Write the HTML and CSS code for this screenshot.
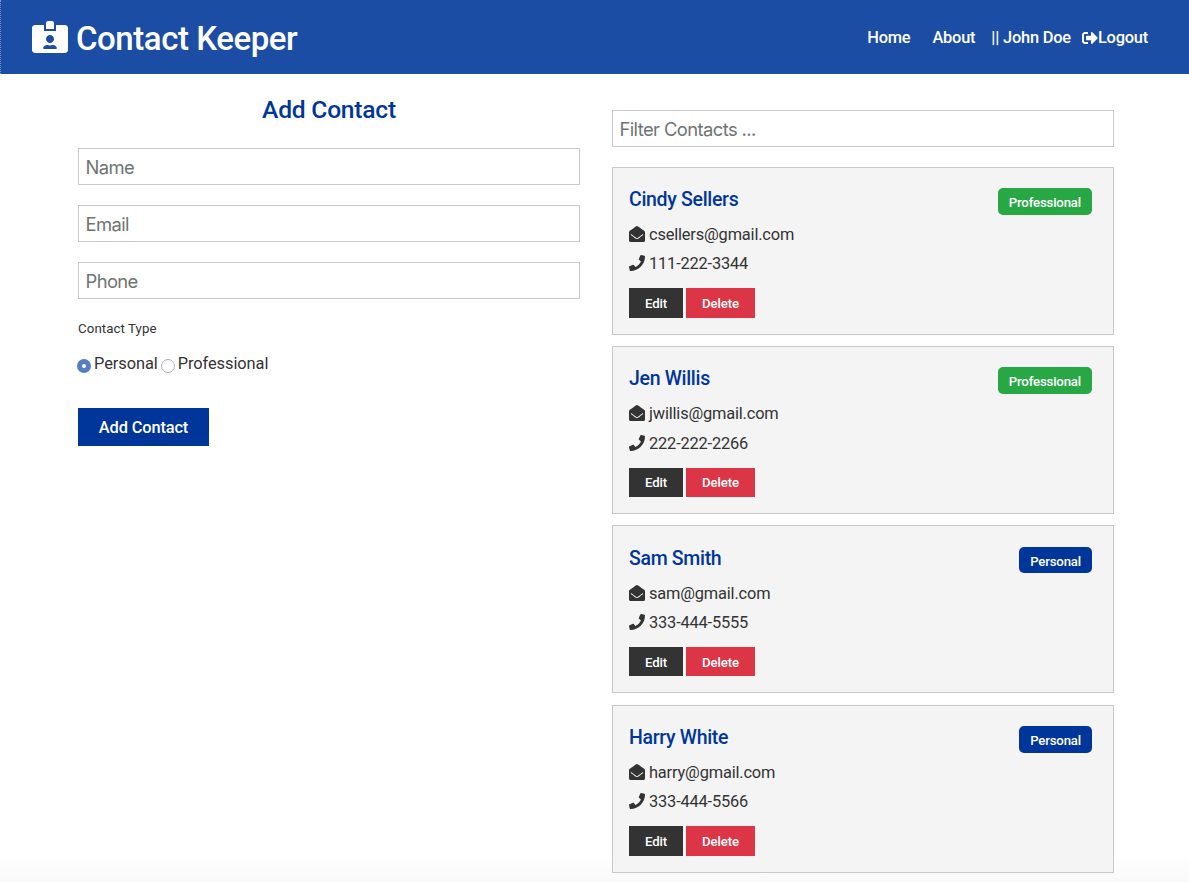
FILE: index.html
```html
<!DOCTYPE html>
<html lang="en">
<head>
<meta charset="utf-8">
<title>Contact Keeper</title>
<link rel="stylesheet" href="styles.css">
</head>
<body>
<svg class="sprite" aria-hidden="true">
  <symbol id="id-card" viewBox="0 0 576 512"><path d="M528 64H384v96H192V64H48C21.5 64 0 85.5 0 112v352c0 26.5 21.5 48 48 48h480c26.5 0 48-21.5 48-48V112c0-26.5-21.5-48-48-48zM288 224c35.3 0 64 28.7 64 64s-28.7 64-64 64-64-28.7-64-64 28.7-64 64-64zm93.3 224H194.7c-10.4 0-18.8-10-15.6-19.8 8.3-25.6 32.4-44.2 60.9-44.2h8.2c12.3 5.1 25.7 8 39.8 8s27.6-2.9 39.8-8h8.2c28.4 0 52.5 18.5 60.9 44.2 3.2 9.9-5.2 19.8-15.6 19.8zM352 32c0-17.7-14.3-32-32-32h-64c-17.7 0-32 14.3-32 32v96h128V32z"/></symbol>
  <symbol id="sign-out" viewBox="0 0 512 512"><path d="M497 273L329 441c-15 15-41 4.5-41-17v-96H152c-13.3 0-24-10.7-24-24v-96c0-13.3 10.7-24 24-24h136V88c0-21.4 25.9-32 41-17l168 168c9.3 9.4 9.3 24.6 0 34zM192 436v-40c0-6.6-5.4-12-12-12H96c-17.7 0-32-14.3-32-32V160c0-17.7 14.3-32 32-32h84c6.6 0 12-5.4 12-12V76c0-6.6-5.4-12-12-12H96c-53 0-96 43-96 96v192c0 53 43 96 96 96h84c6.6 0 12-5.4 12-12z"/></symbol>
  <symbol id="envelope" viewBox="0 0 512 512"><path d="M512 464c0 26.51-21.49 48-48 48H48c-26.51 0-48-21.49-48-48V200.724a48 48 0 0 1 18.387-37.776c24.913-19.529 45.501-35.365 164.2-121.511C199.412 29.17 232.797-.347 256 .003c23.198-.354 56.596 29.172 73.413 41.433 118.687 86.137 139.303 101.995 164.2 121.512A48 48 0 0 1 512 200.724V464zm-65.666-196.605c-2.563-3.728-7.7-4.595-11.339-1.907-22.845 16.873-55.462 40.705-105.582 77.079-16.825 12.266-50.21 41.781-73.413 41.43-23.211.344-56.559-29.143-73.413-41.43-50.114-36.37-82.734-60.204-105.582-77.079-3.639-2.688-8.776-1.821-11.339 1.907l-9.072 13.196a7.998 7.998 0 0 0 1.839 10.967c22.887 16.899 55.454 40.69 105.303 76.868 20.274 14.781 56.524 47.813 92.264 47.573 35.724.242 71.961-32.771 92.263-47.573 49.85-36.179 82.418-59.97 105.303-76.868a7.998 7.998 0 0 0 1.839-10.967l-9.071-13.196z"/></symbol>
  <symbol id="phone" viewBox="0 0 512 512"><path d="M493.4 24.6l-104-24c-11.3-2.6-22.9 3.3-27.5 13.9l-48 112c-4.2 9.8-1.4 21.3 6.9 28l60.6 49.6c-36 76.7-98.9 140.5-177.2 177.2l-49.6-60.6c-6.8-8.3-18.2-11.1-28-6.9l-112 48C3.9 366.5-2 378.1.6 389.4l24 104C27.1 504.2 36.7 512 48 512c256.1 0 464-207.5 464-464 0-11.2-7.7-20.9-18.6-23.4z"/></symbol>
</svg>
<header class="navbar">
  <h1 class="brand"><svg class="brand-icon"><use href="#id-card"/></svg><span>Contact Keeper</span></h1>
  <nav class="links">
    <a class="home">Home</a><a class="about">About</a><span class="user">|| John Doe</span><a class="logout"><svg class="icon"><use href="#sign-out"/></svg><span>Logout</span></a>
  </nav>
</header>
<main class="container">
  <form class="contact-form">
    <h2 class="form-title">Add Contact</h2>
    <input class="field" type="text" placeholder="Name">
    <input class="field" type="text" placeholder="Email">
    <input class="field" type="text" placeholder="Phone">
    <h5 class="type-label">Contact Type</h5>
    <div class="radios">
      <label class="radio"><input type="radio" name="type" checked><span>Personal</span></label>
      <label class="radio"><input type="radio" name="type"><span>Professional</span></label>
    </div>
    <button class="submit" type="button">Add Contact</button>
  </form>
  <section class="contacts">
    <input class="field" type="text" placeholder="Filter Contacts ...">
    <div class="cards">
      <article class="card">
        <div class="card-head"><h3 class="name">Cindy Sellers</h3><span class="badge success">Professional</span></div>
        <p class="line"><svg class="icon"><use href="#envelope"/></svg>csellers@gmail.com</p>
        <p class="line"><svg class="icon"><use href="#phone"/></svg>111-222-3344</p>
        <div class="actions"><button class="btn edit">Edit</button><button class="btn delete">Delete</button></div>
      </article>
      <article class="card">
        <div class="card-head"><h3 class="name">Jen Willis</h3><span class="badge success">Professional</span></div>
        <p class="line"><svg class="icon"><use href="#envelope"/></svg>jwillis@gmail.com</p>
        <p class="line"><svg class="icon"><use href="#phone"/></svg>222-222-2266</p>
        <div class="actions"><button class="btn edit">Edit</button><button class="btn delete">Delete</button></div>
      </article>
      <article class="card">
        <div class="card-head"><h3 class="name">Sam Smith</h3><span class="badge primary">Personal</span></div>
        <p class="line"><svg class="icon"><use href="#envelope"/></svg>sam@gmail.com</p>
        <p class="line"><svg class="icon"><use href="#phone"/></svg>333-444-5555</p>
        <div class="actions"><button class="btn edit">Edit</button><button class="btn delete">Delete</button></div>
      </article>
      <article class="card">
        <div class="card-head"><h3 class="name">Harry White</h3><span class="badge primary">Personal</span></div>
        <p class="line"><svg class="icon"><use href="#envelope"/></svg>harry@gmail.com</p>
        <p class="line"><svg class="icon"><use href="#phone"/></svg>333-444-5566</p>
        <div class="actions"><button class="btn edit">Edit</button><button class="btn delete">Delete</button></div>
      </article>
    </div>
  </section>
</main>
</body>
</html>
```
FILE: styles.css
```css
* { box-sizing: border-box; margin: 0; padding: 0; }
body { width: 1189px; height: 882px; overflow: hidden; font-family: Roboto, "Liberation Sans", sans-serif; font-size: 16.4px; letter-spacing: -0.14px; color: #333; background: linear-gradient(#fff 855px, #f9f9f9 882px); }
h1, h2, h3, h5 { font-weight: 500; }
.sprite { display: none; }
.icon { width: 16px; height: 16px; fill: currentColor; flex: none; }
.navbar { height: 74px; padding: 0 41px 0 31px; display: flex; align-items: center; justify-content: space-between; background: #1c4da4; color: #fff; border-left: 1px dotted #7794c8; }
.brand { display: flex; align-items: center; gap: 8px; font-size: 33px; line-height: 40px; letter-spacing: -0.45px; white-space: nowrap; padding-top: 3px; }
.brand-icon { width: 36px; height: 32px; fill: #fff; margin-top: -3px; }
.links { display: flex; align-items: center; font-weight: 500; line-height: 24px; letter-spacing: -0.2px; white-space: nowrap; padding-top: 1px; }
.about { margin-left: 22px; }
.user { margin-left: 16px; }
.logout { display: flex; align-items: center; margin-left: 11px; }
.container { display: grid; grid-template-columns: 502px 502px; gap: 32px; padding-left: 78px; align-items: start; }
.contact-form { display: flex; flex-direction: column; align-items: flex-start; padding-top: 20px; }
.form-title { align-self: stretch; text-align: center; font-size: 24.6px; line-height: 32px; letter-spacing: -0.22px; color: #003699; margin-bottom: 22px; }
.field { display: block; width: 502px; height: 37px; border: 1px solid #c8c8c8; padding: 1px 6.5px 0; font: 18.4px Inter, sans-serif; letter-spacing: -0.6px; outline: 0; background: #fff; }
.field::placeholder { color: #6f7473; opacity: 1; }
.contact-form .field { margin-bottom: 20px; }
.type-label { font-size: 13.3px; font-weight: 400; line-height: 20px; letter-spacing: 0.07px; }
.radios { display: flex; gap: 3px; margin: 13px 0 0 -1px; height: 24px; letter-spacing: -0.07px; }
.radio { display: flex; align-items: center; gap: 3px; line-height: 24px; }
.radio input { appearance: none; width: 14px; height: 14px; margin-top: 4px; border: 1px solid #abb0ba; border-radius: 50%; background: #fff; }
.radio input:checked { border: 5px solid #567ec4; }
.submit { border: 0; width: 131px; height: 38px; margin-top: 32px; background: #003699; color: #fff; font: 500 16.4px Roboto, sans-serif; letter-spacing: -0.14px; }
.contacts { padding-top: 36px; }
.cards { display: grid; gap: 11.4px; margin-top: 19.6px; }
.card { height: 168px; border: 1px solid #c8c8c8; background: #f4f4f4; padding: 20.5px 21px 0 16px; }
.card-head { display: flex; justify-content: space-between; align-items: flex-start; height: 31.5px; }
.name { font-size: 19.5px; line-height: 24px; letter-spacing: -0.32px; color: #003699; }
.badge { height: 26.6px; line-height: 29.4px; padding: 0 11px; border-radius: 5px; color: #fff; font-size: 13.2px; font-weight: 500; letter-spacing: -0.16px; }
.success { background: #28a745; }
.primary { background: #003699; }
.line { display: flex; align-items: center; gap: 4px; height: 29.4px; letter-spacing: -0.17px; }
.line .icon { margin-top: -1px; }
.actions { display: flex; gap: 3px; margin-top: 9.8px; }
.btn { border: 0; height: 29.4px; padding-top: 1px; color: #fff; font: 500 13.2px Roboto, sans-serif; letter-spacing: -0.1px; }
.edit { width: 54px; background: #333; }
.delete { width: 69px; background: #dc3545; }
```
